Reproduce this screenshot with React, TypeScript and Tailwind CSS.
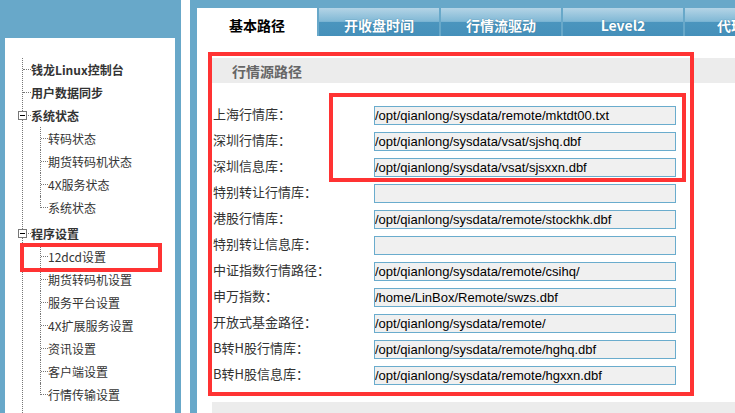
import React from "react";

type Node = { label: string; bold?: boolean };

const tabs = ["基本路径", "开收盘时间", "行情流驱动", "Level2", "代理设置"];

const rows: { label: string; value: string }[] = [
  { label: "上海行情库：", value: "/opt/qianlong/sysdata/remote/mktdt00.txt" },
  { label: "深圳行情库：", value: "/opt/qianlong/sysdata/vsat/sjshq.dbf" },
  { label: "深圳信息库：", value: "/opt/qianlong/sysdata/vsat/sjsxxn.dbf" },
  { label: "特别转让行情库：", value: "" },
  { label: "港股行情库：", value: "/opt/qianlong/sysdata/remote/stockhk.dbf" },
  { label: "特别转让信息库：", value: "" },
  { label: "中证指数行情路径：", value: "/opt/qianlong/sysdata/remote/csihq/" },
  { label: "申万指数：", value: "/home/LinBox/Remote/swzs.dbf" },
  { label: "开放式基金路径：", value: "/opt/qianlong/sysdata/remote/" },
  { label: "B转H股行情库：", value: "/opt/qianlong/sysdata/remote/hghq.dbf" },
  { label: "B转H股信息库：", value: "/opt/qianlong/sysdata/remote/hgxxn.dbf" },
];

const statusItems: Node[] = [
  { label: "转码状态" },
  { label: "期货转码机状态" },
  { label: "4X服务状态" },
  { label: "系统状态" },
];

const settingItems: Node[] = [
  { label: "12dcd设置" },
  { label: "期货转码机设置" },
  { label: "服务平台设置" },
  { label: "4X扩展服务设置" },
  { label: "资讯设置" },
  { label: "客户端设置" },
  { label: "行情传输设置" },
];

const cn = { fontFamily: '"Noto Sans CJK SC", "Liberation Sans", sans-serif' };
const latin = { fontFamily: '"Liberation Sans", "Noto Sans CJK SC", sans-serif' };

function TopItem({ label, folder }: { label: string; folder?: boolean }) {
  return (
    <div className="relative flex items-center h-[23px]">
      {folder && (
        <span className="absolute left-[-5px] top-[7px] w-[9px] h-[9px] border border-[#777] bg-white flex items-center justify-center">
          <span className="w-[5px] h-px bg-black" />
        </span>
      )}
      <span className="w-[8px] border-t border-dotted border-[#777]" />
      <span className="text-[12px] font-bold text-[#333] leading-none">{label}</span>
    </div>
  );
}

function ChildList({ items }: { items: Node[] }) {
  return (
    <div className="ml-[17px]">
      {items.map((it, i) => (
        <div key={it.label} className="flex items-center h-[23px]">
          <span
            className={
              i === items.length - 1
                ? "self-start h-1/2 border-l border-dotted border-[#777]"
                : "self-stretch border-l border-dotted border-[#777]"
            }
          />
          <span className="w-[7px] border-t border-dotted border-[#777]" />
          <span className="text-[12px] text-[#333] leading-none">{it.label}</span>
        </div>
      ))}
    </div>
  );
}

function Sidebar() {
  return (
    <div className="w-[175px] flex-none pl-[5px] pt-[38px]">
      <div className="h-full bg-white pt-[20px]" style={cn}>
        <div className="ml-[17px] h-full border-l border-dotted border-[#777]">
          <TopItem label="钱龙Linux控制台" />
          <TopItem label="用户数据同步" />
          <TopItem label="系统状态" folder />
          <ChildList items={statusItems} />
          <div className="mt-[3px]">
            <TopItem label="程序设置" folder />
          </div>
          <ChildList items={settingItems} />
        </div>
      </div>
    </div>
  );
}

function Tabs() {
  return (
    <div className="flex flex-none gap-[2px] h-[28px] overflow-hidden" style={cn}>
      {tabs.map((t, i) =>
        i === 0 ? (
          <div
            key={t}
            className="w-[120px] flex-none bg-white flex items-center justify-center pt-[5px] text-[14px] font-bold text-black leading-none"
          >
            {t}
          </div>
        ) : (
          <div
            key={t}
            className="w-[120px] flex-none bg-[linear-gradient(to_bottom,#b4d4e6_0%,#80b8d5_48%,#4b95be_50%,#4590ba_100%)] flex items-center justify-center pt-[5px] text-[14px] font-bold text-white leading-none [text-shadow:0_0_1px_#2d6e92]"
          >
            {t}
          </div>
        )
      )}
    </div>
  );
}

function PathRow({ label, value }: { label: string; value: string }) {
  return (
    <div className="flex items-center h-[26px]">
      <div className="w-[162px] pl-[1px] text-[13px] text-[#333] leading-none -mt-[3px]" style={cn}>
        {label}
      </div>
      <div
        className="w-[302px] h-[19px] border border-[#6aaccd] bg-[#f0f0f0] text-[13px] text-black leading-[17px] whitespace-nowrap overflow-hidden"
        style={latin}
      >
        {value}
      </div>
    </div>
  );
}

function SectionHeader({ title }: { title: string }) {
  return (
    <div className="h-[25px] bg-[#ececec] pl-[20px] flex items-center" style={cn}>
      <span className="text-[14px] font-bold text-[#666] leading-none">{title}</span>
    </div>
  );
}

export default function App() {
  return (
    <div className="relative w-[735px] h-[413px] overflow-hidden bg-[#68a8c9] flex">
      <Sidebar />
      <div className="w-[6px] flex-none" />
      <div className="w-[9px] flex-none bg-white" />
      <div className="w-[7px] flex-none" />

      <div className="flex-1 min-w-0 pt-[8px] flex flex-col">
        <Tabs />
        <div className="flex-1 bg-white pl-[15px] pt-[22px]">
          <SectionHeader title="行情源路径" />
          <div className="pt-[19px]">
            {rows.map((r) => (
              <PathRow key={r.label} label={r.label} value={r.value} />
            ))}
          </div>
          <div className="mt-[14px]">
            <div className="h-[25px] bg-[#ececec] pl-[20px] pt-[8px]" style={cn}>
              <span className="text-[14px] font-bold text-[#666]">其他信息路径</span>
            </div>
          </div>
        </div>
      </div>

      {/* red annotation boxes */}
      <div className="absolute left-[208px] top-[52px] w-[486px] h-[344px] border-4 border-[#ff3333]" />
      <div className="absolute left-[329px] top-[93px] w-[357px] h-[89px] border-4 border-[#ff3333]" />
      <div className="absolute left-[20px] top-[243px] w-[142px] h-[29px] border-4 border-[#ff3333]" />
    </div>
  );
}
